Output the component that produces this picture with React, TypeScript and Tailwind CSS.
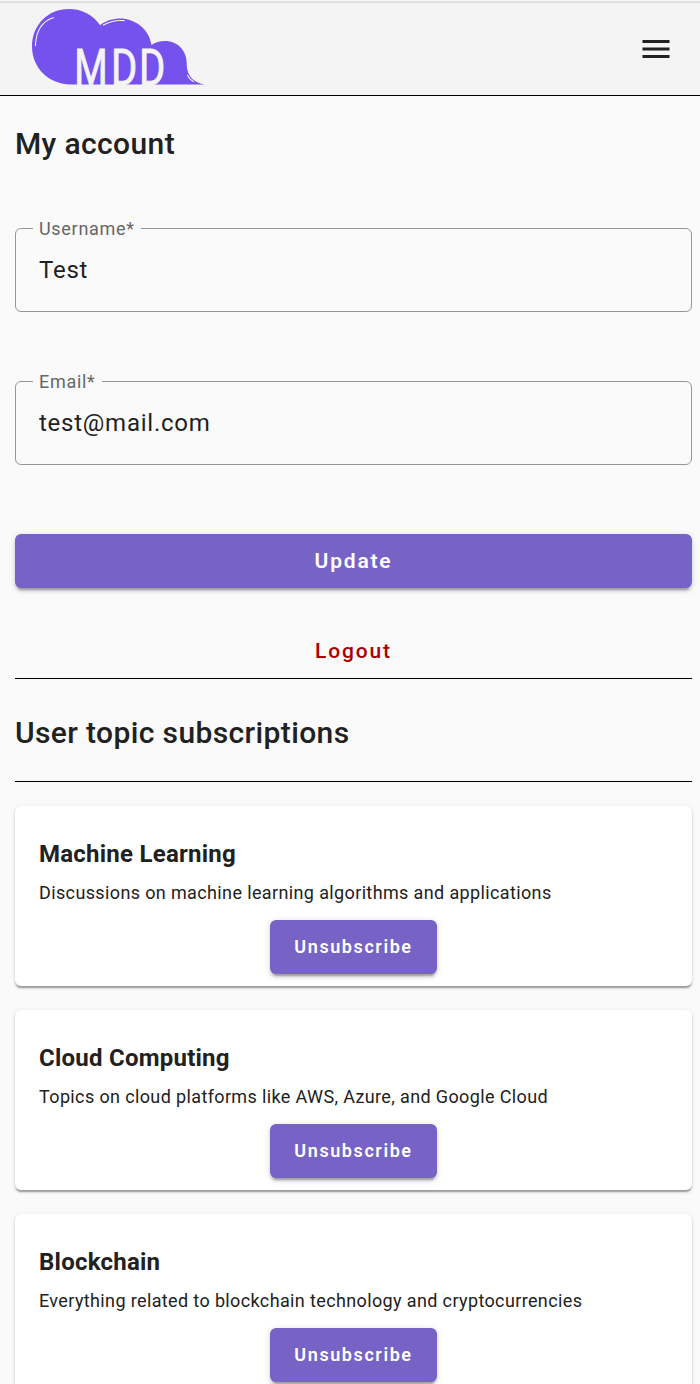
const raised =
  'shadow-[0_4.5px_1.5px_-3px_rgba(0,0,0,0.2),0_3px_3px_0_rgba(0,0,0,0.14),0_1.5px_7.5px_0_rgba(0,0,0,0.12)]';

const topics = [
  { title: 'Machine Learning', text: 'Discussions on machine learning algorithms and applications' },
  { title: 'Cloud Computing', text: 'Topics on cloud platforms like AWS, Azure, and Google Cloud' },
  { title: 'Blockchain', text: 'Everything related to blockchain technology and cryptocurrencies' },
];

function Logo() {
  return (
    <svg width="174" height="88" viewBox="0 0 174 88" className="block overflow-visible" aria-label="MDD">
      <path
        d="M39 75.5C17 75.5 0 59 0 37.5S16 0 37 0C50 0 61 6 68 16.2C74 11.5 81 9.5 88 9.5C103 9.5 117 20 119.5 36C123 33.5 128 32 133 32C146 32 154.700 42 154.700 54V56C155.300 68 162.500 74 173 75.5Z"
        fill="#7551ed"
      />
      <g fill="none" stroke="#f4f4f4" strokeWidth="1.1">
        <path d="M3.4 37C4 21 10 12 22 8.500" />
        <path d="M71 16.300C78 12 84 11 92.500 11.600" />
        <path d="M155.300 66C157 69 159 71.500 162 72.800" />
      </g>
      <g fill="#f4f4f4" stroke="#f4f4f4" strokeWidth="0.9" fontFamily="Roboto" fontSize="50" fontWeight="400">
        <text transform="translate(42.200 75.700) scale(0.765 1)">M</text>
        <text transform="translate(79.100 75.700) scale(0.8 1)">D</text>
        <text transform="translate(107.100 75.700) scale(0.8 1)">D</text>
      </g>
    </svg>
  );
}

function Field({ label, value }: { label: string; value: string }) {
  return (
    <div className="relative flex h-[84px] items-center rounded-[6px] border border-[#979797] px-[23px]">
      <label className="absolute -top-[14px] left-[17px] bg-[#fafafa] px-[6px] text-[18px] leading-[27px] tracking-[0.7px] whitespace-nowrap text-[#666]">
        {label}*
      </label>
      <input
        className="w-full bg-transparent text-[24px] leading-9 tracking-[0.75px] text-[#1f1f1f] outline-none"
        defaultValue={value}
        aria-label={label}
      />
    </div>
  );
}

export default function App() {
  return (
    <div className="h-[1384px] overflow-hidden bg-[#fafafa] font-['Roboto',sans-serif] text-[#212121]">
      <header className="flex h-24 items-start border-t border-b border-t-[#f8f8f8] border-b-black bg-[#f4f4f4]">
        <div className="flex h-[94px] w-full items-start justify-between border-t-2 border-[#e0e1e0] pr-[30px] pl-8">
          <div className="pt-[6px]">
            <Logo />
          </div>
          <button className="mt-[37px]" aria-label="Menu">
            <svg width="28" height="18" viewBox="0 0 28 18" className="block" fill="#212121">
              <path d="M.5 0h27v3H.5zM.5 7.500h27v3H.5zM.5 15h27v3H.5z" />
            </svg>
          </button>
        </div>
      </header>

      <main className="pr-2 pl-[15px]">
        <h1 className="pt-[24px] text-[30px] leading-[48px] font-medium tracking-[0.375px]">My account</h1>
        <form className="mt-[60px] flex flex-col gap-[69px]">
          <Field label="Username" value="Test" />
          <Field label="Email" value="test@mail.com" />
          <button
            type="button"
            className={`h-[54px] rounded-[6px] bg-[#7763c5] pt-[2px] text-[21px] font-semibold tracking-[1.8px] text-white ${raised}`}
          >
            Update
          </button>
        </form>
        <div className="mt-[36px] flex h-[55px] justify-center border-b border-black">
          <button className="h-[54px] pt-[2px] text-[21px] font-medium tracking-[1.87px] text-[#a80000]">Logout</button>
        </div>
        <h2 className="flex h-[103px] items-center border-b border-black pt-[5px] text-[30px] leading-[48px] font-medium tracking-[0.375px]">
          User topic subscriptions
        </h2>

        <section className="mt-6 flex flex-col gap-6">
          {topics.map((topic) => (
            <article
              key={topic.title}
              className="flex h-[180px] flex-col rounded-[6px] bg-white px-6 pt-[30px] shadow-[0_3px_1.5px_-1.5px_rgba(0,0,0,0.2),0_1.5px_1.5px_0_rgba(0,0,0,0.14),0_1.5px_4.5px_0_rgba(0,0,0,0.12)]"
            >
              <h3 className="text-[24px] leading-9 font-bold tracking-[0.24px] whitespace-nowrap">{topic.title}</h3>
              <p className="mt-[6px] text-[18px] leading-[30px] tracking-[0.37px] whitespace-nowrap">{topic.text}</p>
              <button
                className={`mt-3 h-[54px] w-[167px] shrink-0 self-center rounded-[6px] bg-[#7763c5] pb-[2px] text-[18px] font-semibold tracking-[1.58px] text-white ${raised}`}
              >
                Unsubscribe
              </button>
            </article>
          ))}
        </section>
      </main>
    </div>
  );
}
